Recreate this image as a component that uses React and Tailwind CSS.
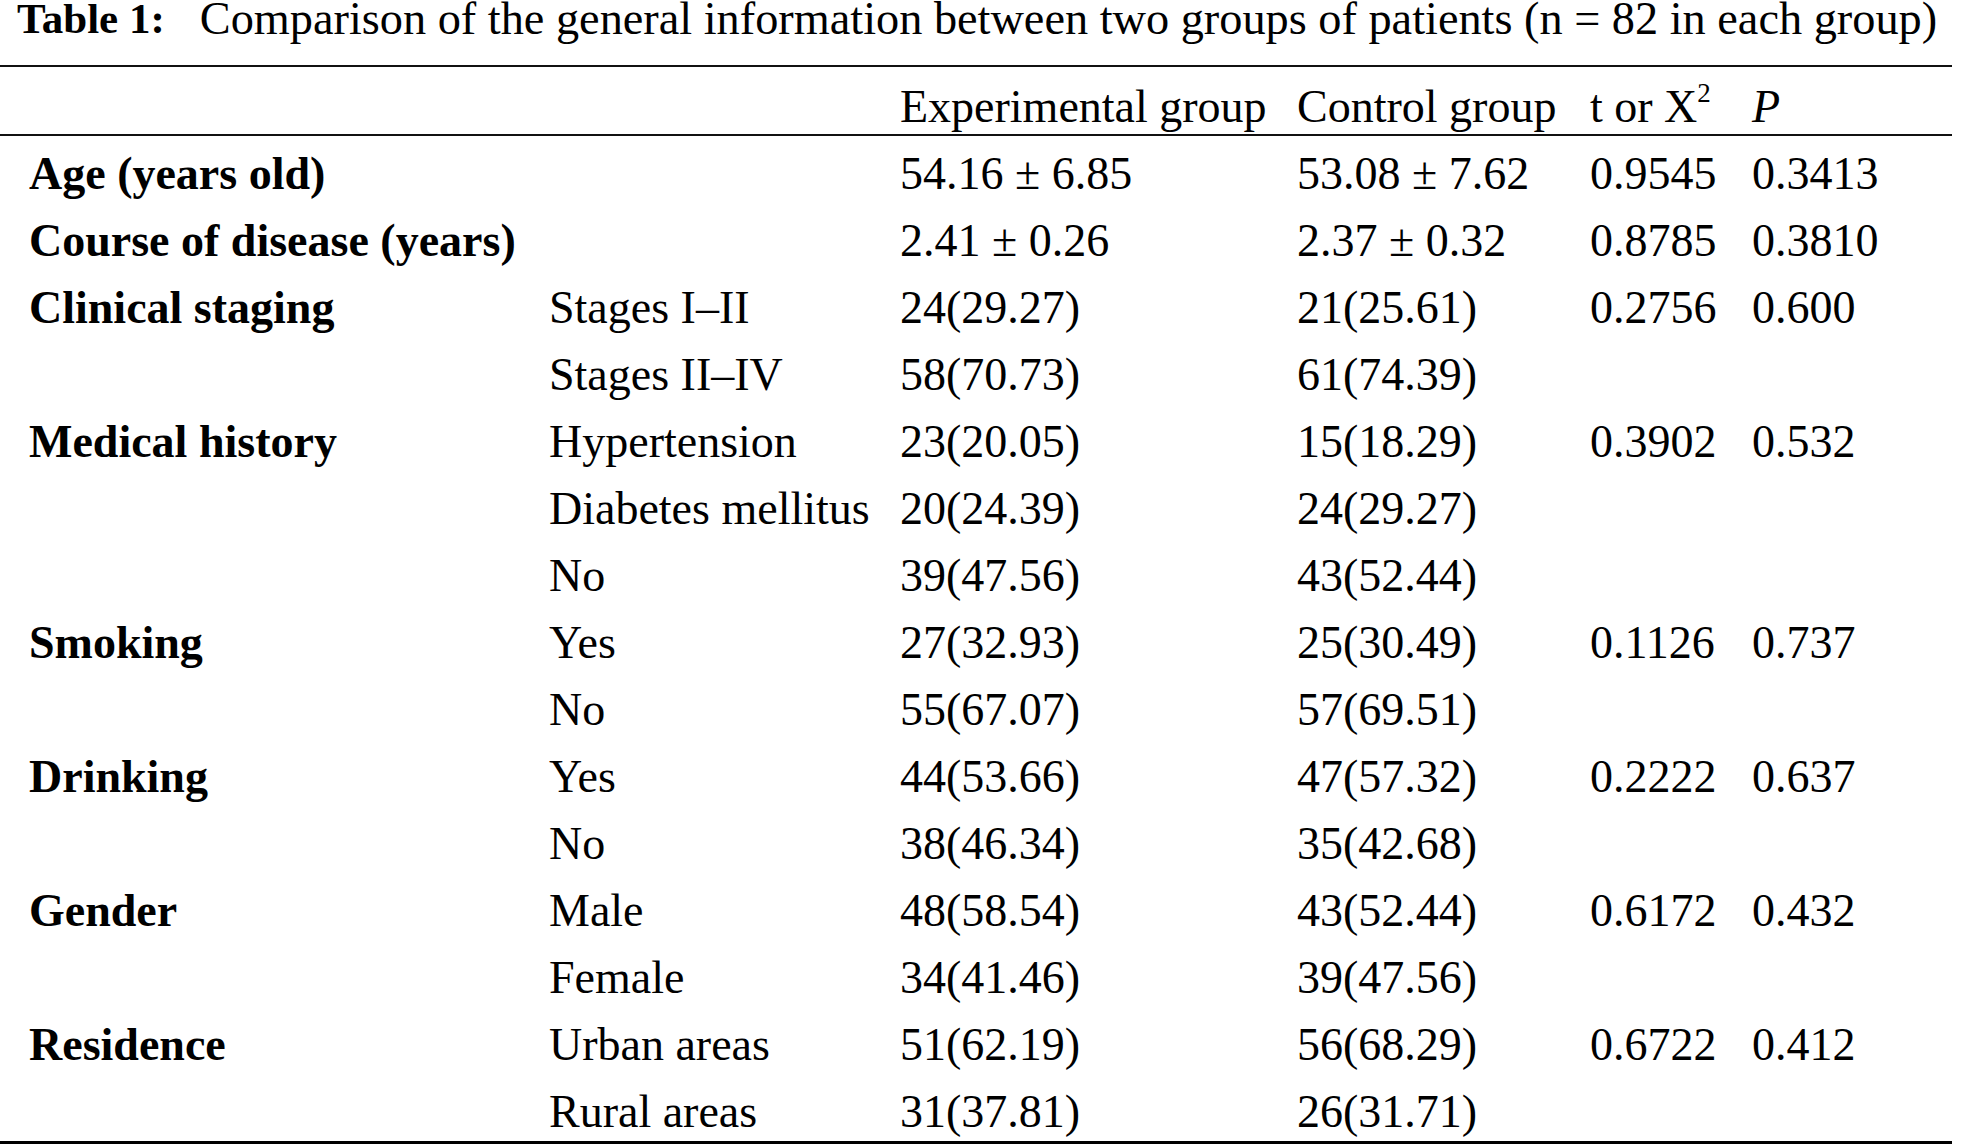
import React from "react";

const rows = [
  ["Age (years old)", "", "54.16 ± 6.85", "53.08 ± 7.62", "0.9545", "0.3413"],
  ["Course of disease (years)", "", "2.41 ± 0.26", "2.37 ± 0.32", "0.8785", "0.3810"],
  ["Clinical staging", "Stages I–II", "24(29.27)", "21(25.61)", "0.2756", "0.600"],
  ["", "Stages II–IV", "58(70.73)", "61(74.39)", "", ""],
  ["Medical history", "Hypertension", "23(20.05)", "15(18.29)", "0.3902", "0.532"],
  ["", "Diabetes mellitus", "20(24.39)", "24(29.27)", "", ""],
  ["", "No", "39(47.56)", "43(52.44)", "", ""],
  ["Smoking", "Yes", "27(32.93)", "25(30.49)", "0.1126", "0.737"],
  ["", "No", "55(67.07)", "57(69.51)", "", ""],
  ["Drinking", "Yes", "44(53.66)", "47(57.32)", "0.2222", "0.637"],
  ["", "No", "38(46.34)", "35(42.68)", "", ""],
  ["Gender", "Male", "48(58.54)", "43(52.44)", "0.6172", "0.432"],
  ["", "Female", "34(41.46)", "39(47.56)", "", ""],
  ["Residence", "Urban areas", "51(62.19)", "56(68.29)", "0.6722", "0.412"],
  ["", "Rural areas", "31(37.81)", "26(31.71)", "", ""],
];

const grid = "grid grid-cols-[520px_351px_397px_293px_162px_1fr] pl-[29px] whitespace-nowrap";

export default function App() {
  return (
    <div
      className="w-[1961px] h-[1145px] bg-white text-black text-[46px] overflow-hidden"
      style={{ fontFamily: '"Liberation Serif", "Times New Roman", serif' }}
    >
      <div className="h-[65px] pl-[17px] whitespace-nowrap leading-[38px] flex items-start">
        <span className="font-bold text-[43px]">Table 1:</span>
        <span className="ml-[35px] text-[46.3px]">
          Comparison of the general information between two groups of patients (n = 82 in each group)
        </span>
      </div>
      <div className="h-[2px] w-[1952px] bg-[#111]" />
      <div className={`${grid} h-[67px] pt-[12px] leading-[55px]`}>
        <div />
        <div />
        <div>Experimental group</div>
        <div>Control group</div>
        <div>
          t or X
          <span className="relative top-[-20px] text-[27px] align-baseline">2</span>
        </div>
        <div className="italic">P</div>
      </div>
      <div className="h-[2px] w-[1952px] bg-[#111]" />
      <div>
        {rows.map((r, i) => (
          <div key={i} className={`${grid} h-[67px] pt-[8px] leading-[59px]`}>
            <div className="font-bold">{r[0]}</div>
            <div>{r[1]}</div>
            <div>{r[2]}</div>
            <div>{r[3]}</div>
            <div>{r[4]}</div>
            <div>{r[5]}</div>
          </div>
        ))}
      </div>
      <div className="h-[3px] w-[1952px] bg-black" />
    </div>
  );
}
